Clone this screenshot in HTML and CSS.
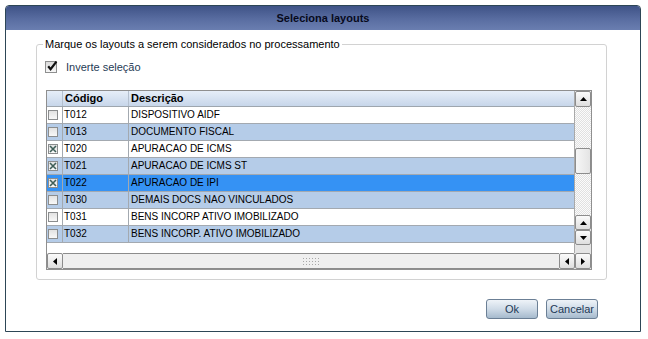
FILE: index.html
```html
<!DOCTYPE html>
<html lang="pt">
<head>
<meta charset="utf-8">
<title>Seleciona layouts</title>
<link rel="stylesheet" href="styles.css">
</head>
<body>
<div class="dialog">
  <div class="titlebar">Seleciona layouts</div>
  <div class="body">
    <fieldset class="group">
      <legend>Marque os layouts a serem considerados no processamento</legend>
      <label class="invert">
        <span class="cb-big"><svg width="12" height="12" viewBox="0 0 12 12"><path d="M2.2 6.2 L4.6 9.2 L10.4 1.6" fill="none" stroke="#111" stroke-width="2.2" stroke-linejoin="miter"/></svg></span>
        <span>Inverte seleção</span>
      </label>
      <div class="grid">
        <div class="grid-main">
          <div class="table">
            <div class="row head"><div class="c-chk"></div><div class="c-code">Código</div><div class="c-desc">Descrição</div></div>
            <div class="row"><div class="c-chk"><span class="cb"></span></div><div class="c-code">T012</div><div class="c-desc">DISPOSITIVO AIDF</div></div>
            <div class="row alt"><div class="c-chk"><span class="cb"></span></div><div class="c-code">T013</div><div class="c-desc">DOCUMENTO FISCAL</div></div>
            <div class="row"><div class="c-chk"><span class="cb checked"><svg width="8" height="8" viewBox="0 0 8 8"><path d="M1 1 L7 7 M7 1 L1 7" stroke="#3f5f58" stroke-width="1.6"/></svg></span></div><div class="c-code">T020</div><div class="c-desc">APURACAO DE ICMS</div></div>
            <div class="row alt"><div class="c-chk"><span class="cb checked"><svg width="8" height="8" viewBox="0 0 8 8"><path d="M1 1 L7 7 M7 1 L1 7" stroke="#3f5f58" stroke-width="1.6"/></svg></span></div><div class="c-code">T021</div><div class="c-desc">APURACAO DE ICMS ST</div></div>
            <div class="row sel"><div class="c-chk"><span class="cb checked"><svg width="8" height="8" viewBox="0 0 8 8"><path d="M1 1 L7 7 M7 1 L1 7" stroke="#3f5f58" stroke-width="1.6"/></svg></span></div><div class="c-code">T022</div><div class="c-desc">APURACAO DE IPI</div></div>
            <div class="row alt"><div class="c-chk"><span class="cb"></span></div><div class="c-code">T030</div><div class="c-desc">DEMAIS DOCS NAO VINCULADOS</div></div>
            <div class="row"><div class="c-chk"><span class="cb"></span></div><div class="c-code">T031</div><div class="c-desc">BENS INCORP ATIVO IMOBILIZADO</div></div>
            <div class="row alt"><div class="c-chk"><span class="cb"></span></div><div class="c-code">T032</div><div class="c-desc">BENS INCORP. ATIVO IMOBILIZADO</div></div>
          </div>
          <div class="vscroll">
            <div class="sbtn tall"><svg width="7" height="4" viewBox="0 0 7 4"><polygon points="3.5,0 7,4 0,4" fill="#000"/></svg></div>
            <div class="vtrack"><div class="vthumb"></div></div>
            <div class="sbtn"><svg width="7" height="4" viewBox="0 0 7 4"><polygon points="3.5,0 7,4 0,4" fill="#000"/></svg></div>
            <div class="sbtn"><svg width="7" height="4" viewBox="0 0 7 4"><polygon points="0,0 7,0 3.5,4" fill="#000"/></svg></div>
            <div class="corner"></div>
          </div>
        </div>
        <div class="hscroll">
          <div class="hbtn"><svg width="4" height="7" viewBox="0 0 4 7"><polygon points="0,3.5 4,0 4,7" fill="#000"/></svg></div>
          <div class="htrack"><span class="grip"></span></div>
          <div class="hbtn"><svg width="4" height="7" viewBox="0 0 4 7"><polygon points="0,3.5 4,0 4,7" fill="#000"/></svg></div>
          <div class="hbtn"><svg width="4" height="7" viewBox="0 0 4 7"><polygon points="0,0 4,3.5 0,7" fill="#000"/></svg></div>
        </div>
      </div>
    </fieldset>
  </div>
  <div class="footer">
    <button class="btn">Ok</button>
    <button class="btn">Cancelar</button>
  </div>
</div>
</body>
</html>
```

FILE: styles.css
```css
html, body {
  margin: 0;
  padding: 0;
}
body {
  width: 648px;
  height: 339px;
  background: #ffffff;
  font-family: "Liberation Sans", Arial, sans-serif;
  font-size: 11px;
  color: #000;
  overflow: hidden;
}
.dialog {
  margin: 5px 0 0 5px;
  width: 636px;
  height: 327px;
  box-sizing: border-box;
  border: 1px solid #2d4656;
  border-radius: 4px 4px 0 0;
  display: flex;
  flex-direction: column;
  background: #fff;
}
.titlebar {
  height: 24px;
  line-height: 24px;
  text-align: center;
  font-weight: bold;
  font-size: 11px;
  color: #070a1c;
  background: linear-gradient(#3f5387, #5b6fa3 60%, #6a7eb0);
  border-radius: 3px 3px 0 0;
}
.body {
  padding: 8px 0 0 30px;
}
.group {
  margin: 0;
  width: 571px;
  box-sizing: border-box;
  padding: 9px 0 9px 9px;
  border: 1px solid #d2d2d2;
  border-radius: 3px;
}
.group legend {
  margin-left: -3px;
  padding: 0 2px;
  line-height: 13px;
  font-size: 11px;
  color: #000;
}
.invert {
  display: flex;
  align-items: center;
  height: 14px;
  gap: 9px;
  margin-bottom: 16px;
  margin-left: -1px;
  color: #1f3b55;
}
.cb-big {
  width: 12px;
  height: 12px;
  box-sizing: border-box;
  border: 1px solid #8e8f8f;
  background: linear-gradient(#dcdcdc, #f7f7f7);
  display: flex;
  align-items: center;
  justify-content: center;
}
.cb-big svg {
  margin-top: -2px;
  margin-right: -2px;
}
.grid {
  width: 546px;
  height: 180px;
  box-sizing: border-box;
  border: 1px solid #8f8f8f;
  display: flex;
  flex-direction: column;
}
.grid-main {
  display: flex;
  height: 162px;
}
.table {
  width: 527px;
  background: #fff;
}
.row {
  display: flex;
  height: 17px;
  box-sizing: border-box;
  border-bottom: 1px solid #a3a9b0;
  background: #fff;
  line-height: 16px;
  font-size: 10px;
}
.row.alt {
  background: #b5cce8;
}
.row.sel {
  background: #3592f4;
}
.row.head {
  height: 16px;
  line-height: 15px;
  font-size: 11px;
  font-weight: bold;
  background: linear-gradient(#e6eef8, #c7d6ea);
  border-bottom: 1px solid #9ea6ae;
}
.c-chk {
  width: 16px;
  box-sizing: border-box;
  border-right: 1px solid #a3a9b0;
  display: flex;
  align-items: center;
  padding-left: 1px;
}
.c-code {
  width: 66px;
  box-sizing: border-box;
  border-right: 1px solid #a3a9b0;
  padding-left: 1px;
}
.head .c-code {
  padding-left: 2px;
}
.c-desc {
  flex: 1;
  padding-left: 2px;
  white-space: nowrap;
}
.head .c-chk, .head .c-code {
  border-right-color: #b4c0cf;
}
.cb {
  width: 10px;
  height: 10px;
  box-sizing: border-box;
  border: 1px solid #8b8d8e;
  background: linear-gradient(#e2e2e2, #f8f8f8);
  display: flex;
  align-items: center;
  justify-content: center;
}
.vscroll {
  width: 17px;
  box-sizing: border-box;
  border-left: 1px solid #a9a9a9;
  display: flex;
  flex-direction: column;
  background: #ececec;
}
.sbtn, .hbtn {
  box-sizing: border-box;
  border: 1px solid #8c8c8c;
  border-radius: 2px;
  background: linear-gradient(#fbfbfb, #dedede);
  display: flex;
  align-items: center;
  justify-content: center;
}
.sbtn {
  width: 16px;
  height: 15px;
}
.sbtn.tall {
  height: 16px;
}
.vtrack {
  height: 108px;
  background: repeating-conic-gradient(#e0e0e0 0 25%, #fbfbfb 0 50%) 0 0 / 2px 2px;
}
.vthumb {
  margin-top: 41px;
  height: 26px;
  box-sizing: border-box;
  border: 1px solid #8c8c8c;
  border-radius: 2px;
  background: linear-gradient(90deg, #f6f6f6, #e4e4e4);
}
.corner {
  height: 8px;
  background: #e4e4e4;
}
.hscroll {
  height: 16px;
  display: flex;
  background: #efefef;
}
.hbtn {
  width: 16px;
  height: 16px;
}
.htrack {
  flex: 1;
  border-top: 1px solid #8c8c8c;
  border-bottom: 1px solid #8c8c8c;
  background: #efefef;
  display: flex;
  align-items: center;
  justify-content: center;
}
.grip {
  width: 18px;
  height: 9px;
  background: radial-gradient(circle, #a8a8a8 0.6px, transparent 0.8px) 0 0 / 3px 3px;
}
.footer {
  margin-top: auto;
  display: flex;
  justify-content: flex-end;
  gap: 8px;
  padding: 0 42px 12px 0;
}
.btn {
  width: 52px;
  height: 20px;
  margin: 0;
  padding: 0;
  box-sizing: border-box;
  border: 1px solid #6b7f95;
  border-radius: 3px;
  background: linear-gradient(#eef3f8, #cfdbe7 50%, #a6bacd);
  font-family: "Liberation Sans", Arial, sans-serif;
  font-size: 11px;
  color: #1d3957;
}
```
